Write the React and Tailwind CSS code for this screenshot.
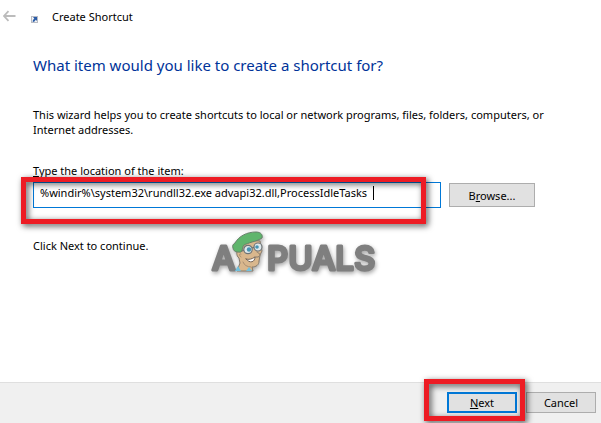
import { useState } from "react";

function BackArrow() {
  return (
    <svg width="13" height="12" viewBox="0 0 13 12" fill="none" stroke="#bcbcbc" strokeWidth="1.8">
      <path d="M12.5 6H1.2M5.5 1.2L1 6l4.5 4.8" />
    </svg>
  );
}

function ShortcutIcon() {
  return (
    <svg width="7" height="7" viewBox="0 0 7 7">
      <rect x="0.5" y="0.5" width="6" height="6" fill="#f4f4f4" stroke="#b9bcc4" />
      <path d="M2 1h4v4l-1.2-1.2L3 6 1.5 5.5 2 4l1.3-1.6z" fill="#2a5ca8" />
    </svg>
  );
}

function Watermark() {
  return (
    <svg
      width="172"
      height="44"
      viewBox="0 0 172 44"
      strokeLinejoin="round"
      strokeLinecap="round"
      className="pointer-events-none absolute -top-1.5 left-[177px] overflow-visible drop-shadow-[1px_2px_2px_rgba(0,0,0,0.35)]"
    >
      <g className="font-['Inter'] text-[33px] font-medium" fill="#7f7f7f" stroke="#7f7f7f" strokeWidth="3">
        <text x="2" y="38">A</text>
        <text x="57" y="38">PUALS</text>
      </g>

      {/* Face and neck */}
      <path
        d="M29 18c-3 0-3 6 0 8l1 5-3 8h16l-1-4c4 0 7-2 7-6l1-6 2-4-2-10-14-1z"
        fill="#d9b78d"
        stroke="#857a6c"
      />
      <path d="M47 20c3 1 4 4 1 5h-3" fill="#d9b78d" stroke="#857a6c" />
      <path d="M31 22c-2-1-2 2 0 3M33 30c1 3 4 5 8 5" fill="none" stroke="#9c8469" strokeWidth="0.8" />
      {/* Hair */}
      <path
        d="M27 20c-2 0-4-2-4-4-1-2 0-4 2-5C29 4 37 0 46 0c5 0 7 3 6 6-3 2-6 3-10 4-3 1-6 2-8 3-2 2-1 6-3 7z"
        fill="#5fb56c"
        stroke="#66806a"
      />
      {/* Glasses */}
      <path d="M32 19l3-1M42 16l3-1" fill="none" stroke="#696e70" strokeWidth="1.2" />
      <circle cx="38" cy="17.5" r="4.2" fill="#dfe9ec" stroke="#6e7477" strokeWidth="1.2" />
      <circle cx="48" cy="15" r="4" fill="#dfe9ec" stroke="#6e7477" strokeWidth="1.2" />
      <circle cx="39" cy="17.5" r="2.2" fill="#4694b3" />
      <circle cx="47" cy="15" r="1.8" fill="#4694b3" />
      <path d="M36 27c3 1 6 0 9-2 0 5-5 7-9 2z" fill="#fff" stroke="#75665a" />
      {/* Collar */}
      <path d="M25 39l3-5 3 5zM36 39l3-4 3 4z" fill="#72c0dc" />
    </svg>
  );
}

export default function App() {
  const [location, setLocation] = useState(
    "%windir%\\system32\\rundll32.exe advapi32.dll,ProcessIdleTasks"
  );

  return (
    <div className="flex min-h-screen flex-col bg-white font-['Noto_Sans','Open_Sans',sans-serif] text-[11px] leading-[15px] text-black">
      <header className="flex h-8 items-center px-[3px]">
        <button type="button" aria-label="Back">
          <BackArrow />
        </button>
        <div className="ml-[15px] flex items-center gap-[14px]">
          <div className="pt-1.5">
            <ShortcutIcon />
          </div>
          <h1>Create Shortcut</h1>
        </div>
      </header>

      <main className="grow px-[33px] pt-[21px]">
        <h2 className="text-[15px] leading-6 text-[#003399]">
          What item would you like to create a shortcut for?
        </h2>
        <p className="mt-[30px] max-w-[530px]">
          This wizard helps you to create shortcuts to local or network programs, files, folders, computers, or
          Internet addresses.
        </p>

        <label htmlFor="location" className="mt-[26px] block">
          <u>T</u>ype the location of the item:
        </label>
        <div className="mt-1 flex items-center gap-2 pr-[33px]">
          <div className="relative grow">
            <input
              id="location"
              type="text"
              value={location}
              onChange={(e) => setLocation(e.target.value)}
              className="block h-[26px] w-full border border-[#0078d7] bg-white px-1.5 pb-1.5 outline-none"
            />
            {/* Text cursor */}
            <span className="absolute top-1 left-[340px] h-[14px] w-px bg-black" />
            {/* Highlight */}
            <div className="pointer-events-none absolute -top-[5px] right-[15px] -left-3 h-[47px] border-5 border-[#ed1c24] drop-shadow-[2px_2px_3px_rgba(0,0,0,0.7)]" />
          </div>
          <button type="button" className="h-6 w-[86px] border border-[#adadad] bg-[#e1e1e1]">
            B<u>r</u>owse...
          </button>
        </div>

        <div className="relative mt-[30px]">
          <p>Click Next to continue.</p>
          <Watermark />
        </div>
      </main>

      <footer className="flex h-[41px] items-start justify-end gap-[9px] border-t border-[#dfdfdf] bg-[#f0f0f0] pt-[9px] pr-[5px]">
        <div className="relative">
          <button type="button" className="block h-[21px] w-[70px] border-2 border-[#0078d7] bg-[#e1e1e1]">
            <u>N</u>ext
          </button>
          <div className="pointer-events-none absolute -top-[13px] -right-2 -bottom-2 -left-[23px] border-5 border-[#ed1c24] drop-shadow-[2px_2px_3px_rgba(0,0,0,0.7)]" />
        </div>
        <button type="button" className="h-[21px] w-[70px] border border-[#adadad] bg-[#e1e1e1]">
          Cancel
        </button>
      </footer>
    </div>
  );
}
